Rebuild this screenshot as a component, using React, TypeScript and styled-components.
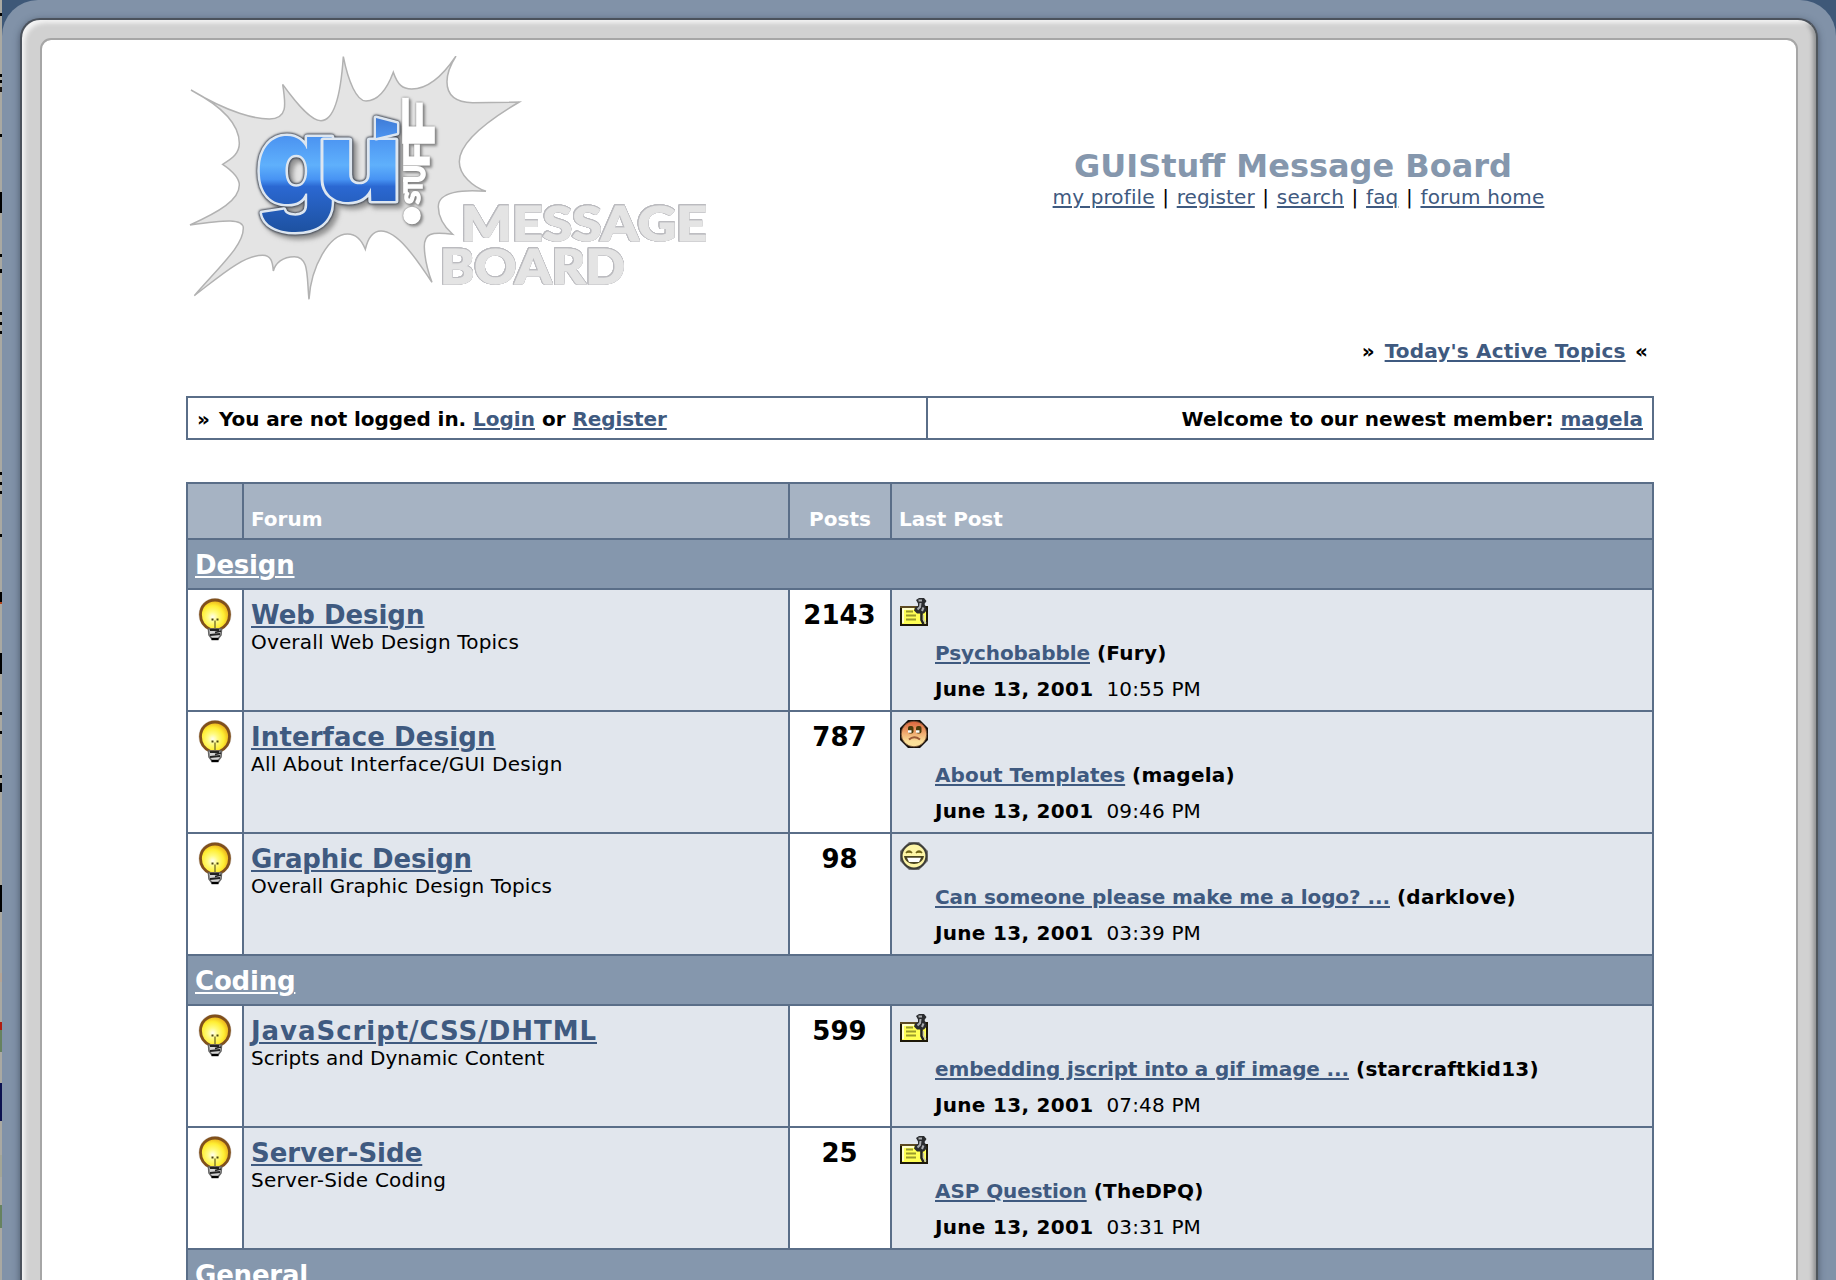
import React from "react";
import styled, { createGlobalStyle } from "styled-components";

const ink = {
  line: "#5a6e88",
  link: "#3f5a80",
  head: "#a6b3c3",
  bar: "#8597ad",
  cell: "#e1e6ed",
};

const GlobalStyle = createGlobalStyle`
  * { box-sizing: border-box; }
  html, body { margin: 0; padding: 0; }
  body {
    height: 1280px;
    overflow: hidden;
    font-family: Verdana, "DejaVu Sans", sans-serif;
    font-size: 20px;
    line-height: 24px;
    color: #000;
  }
`;

/* ---------- window chrome ---------- */

const Page = styled.div`
  display: flex;
  width: 1836px;
  height: 1280px;
  overflow: hidden;
  background: #3e5878;
`;

const bandStops = (bands: [number, number, string][], base: string) => {
  const stops: string[] = [];
  let y = 0;
  bands.forEach(([from, to, color]) => {
    stops.push(`${base} ${y}px ${from}px`, `${color} ${from}px ${to}px`);
    y = to;
  });
  stops.push(`${base} ${y}px 1280px`);
  return `linear-gradient(180deg, ${stops.join(", ")})`;
};

const sliver: [number, number, string][] = [
  [13, 16, "#000"], [74, 77, "#000"], [80, 83, "#000"], [87, 92, "#1c1712"],
  [134, 137, "#000"], [192, 213, "#000"], [254, 257, "#000"], [269, 273, "#000"],
  [312, 315, "#000"], [322, 325, "#000"], [331, 334, "#000"], [472, 475, "#000"],
  [482, 485, "#000"], [491, 494, "#000"], [534, 537, "#000"], [592, 602, "#000"],
  [602, 604, "#b3441c"], [653, 674, "#000"], [712, 715, "#000"], [731, 734, "#000"],
  [775, 778, "#000"], [783, 792, "#000"], [885, 912, "#000"], [973, 982, "#b5a494"],
  [1022, 1030, "#b01c10"], [1030, 1052, "#66825e"], [1083, 1121, "#0c1250"],
  [1155, 1177, "#a3a596"], [1205, 1228, "#66825e"],
];

const Sliver = styled.div`
  flex: 0 0 2px;
  background: ${bandStops(sliver, "#aaa9a2")};
`;

const Shell = styled.div`
  flex: 1;
  padding: 18px 18px 0;
  background: #8192a8;
  border-radius: 36px 36px 0 0;
`;

const Bezel = styled.div`
  height: 1400px;
  padding: 18px 18px 0 18px;
  border: 2px solid #4b525c;
  border-right-color: #4f565c;
  border-radius: 20px 20px 0 0;
  background: #d1d1d1;
  box-shadow:
    0 2px 7px rgba(38, 48, 66, 0.6),
    inset 5px 5px 4px -2px #f4f4f4,
    inset -5px 0 4px -2px #8f9192;
`;

const Sheet = styled.div`
  height: 100%;
  padding: 16px 142px 0 144px;
  border: 2px solid #a6a6a6;
  border-radius: 11px 11px 0 0;
  background: #fff;
  background-clip: padding-box;
`;

/* ---------- text ---------- */

const Run = styled.span<{ $track?: number }>`
  letter-spacing: ${(p) => p.$track ?? 0}px;
`;

const Link = styled.a<{ $track?: number; $light?: boolean }>`
  color: ${(p) => (p.$light ? "#fff" : ink.link)};
  letter-spacing: ${(p) => p.$track ?? 0}px;
  text-decoration: underline;
  text-decoration-thickness: 2px;
  text-underline-offset: 2px;
  cursor: pointer;
`;

const Quote = styled.span<{ $before?: number; $after?: number }>`
  margin-left: ${(p) => p.$before ?? 0}px;
  margin-right: ${(p) => p.$after ?? 0}px;
`;

/* ---------- masthead ---------- */

const Masthead = styled.header`
  display: flex;
  justify-content: space-between;
  height: 244px;
`;

const Titles = styled.div`
  width: 722px;
  padding-top: 92px;
  text-align: center;
`;

const BoardTitle = styled.h1`
  margin: 0;
  font-size: 32px;
  line-height: 37px;
  color: ${ink.bar};
`;

const Nav = styled.nav`
  padding-left: 11px;
`;

const Pipe = styled.span`
  margin: 0 7.8px 0 7.5px;
`;

const ActiveTopics = styled.div`
  margin: 39px 6px 33px 0;
  font-weight: 700;
  text-align: right;
`;

const StatusBar = styled.div`
  display: grid;
  grid-template-columns: 738px 1fr;
  gap: 2px;
  height: 44px;
  margin-bottom: 42px;
  padding: 2px;
  background: ${ink.line};
  font-weight: 700;
`;

const StatusCell = styled.div<{ $end?: boolean }>`
  padding: 9px 9px 0;
  background: #fff;
  text-align: ${(p) => (p.$end ? "right" : "left")};
`;

/* ---------- forum table ---------- */

const Table = styled.div`
  display: grid;
  grid-template-columns: 54px 544px 100px 1fr;
  gap: 2px;
  padding: 2px;
  background: ${ink.line};
`;

const HeadCell = styled.div<{ $center?: boolean }>`
  height: 54px;
  padding: 23px 7px 0;
  background: ${ink.head};
  color: #fff;
  font-weight: 700;
  text-align: ${(p) => (p.$center ? "center" : "left")};
`;

const Category = styled.div`
  grid-column: 1 / -1;
  height: 48px;
  padding: 9px 7px 0;
  background: ${ink.bar};
  font-size: 26px;
  font-weight: 700;
  line-height: 32px;
`;

const IconCell = styled.div`
  display: flex;
  justify-content: center;
  align-items: flex-start;
  height: 120px;
  padding-top: 8px;
  background: #fff;
`;

const ForumCell = styled.div`
  padding: 10px 7px 0;
  background: ${ink.cell};
`;

const ForumName = styled.div`
  font-size: 26px;
  font-weight: 700;
  line-height: 30px;
`;

const PostCount = styled.div`
  padding: 10px 1px 0 0;
  background: #fff;
  font-size: 26px;
  font-weight: 700;
  line-height: 30px;
  text-align: center;
`;

const LastCell = styled.div`
  padding: 8px 8px 0;
  background: ${ink.cell};

  svg { display: block; }
`;

const LastInfo = styled.div`
  display: flex;
  flex-direction: column;
  gap: 12px;
  padding: 15px 0 0 35px;
`;

const Stamp = styled.div`
  white-space: pre;
`;

/* ---------- drawings ---------- */

const burst =
  "M15 120 C130 190 210 207 250 207 C305 207 300 165 290 103 C335 165 375 212 405 212 C447 212 465 125 472 20 " +
  "C487 95 512 153 540 153 C575 153 603 118 622 67 C635 105 650 117 677 117 C725 117 770 78 810 18 " +
  "C793 45 783 70 783 95 C783 140 815 157 860 158 L1000 156 C900 215 820 280 820 335 C820 375 860 410 900 424 " +
  "C830 418 757 425 757 470 C757 505 775 530 800 553 C735 545 715 550 715 590 C716 630 726 665 738 697 " +
  "C690 625 635 543 585 543 C560 543 545 568 538 598 C525 565 505 552 485 552 C430 552 375 650 369 748 " +
  "C362 680 370 620 325 620 C290 620 268 640 262 663 C260 635 255 616 230 616 C170 616 100 680 25 737 " +
  "C110 640 172 585 172 535 C172 505 120 510 12 525 C100 485 160 450 160 405 C160 380 135 360 110 343 " +
  "C140 325 160 310 160 280 C160 220 100 165 15 120 Z";

const LogoSvg = styled.svg`
  .gui {
    font-family: Inter, Roboto, sans-serif;
    font-weight: 900;
    fill: url(#blue);
    stroke: #dde6f0;
    stroke-width: 5px;
    stroke-linejoin: round;
    paint-order: stroke;
    filter: drop-shadow(0 0 0.8px #3c4350) drop-shadow(0 0 0.8px #3c4350) drop-shadow(4px 4px 2px rgba(70, 70, 70, 0.5));
  }
  .stuff {
    font-family: Lato, sans-serif;
    font-weight: 900;
    fill: #fff;
    stroke: #fff;
    stroke-width: 1.6px;
    filter: drop-shadow(0 0 0.8px #777) drop-shadow(2px 2px 1px rgba(90, 90, 90, 0.6));
  }
  .board {
    font-family: Lato, sans-serif;
    font-weight: 900;
    font-size: 47px;
    fill: #e4e4e4;
    stroke: #e4e4e4;
    stroke-width: 1.2px;
    filter: drop-shadow(0.7px 0 0 #bbbbbf) drop-shadow(-0.7px 0 0 #bbbbbf) drop-shadow(0 0.7px 0 #bbbbbf) drop-shadow(0 -0.7px 0 #bbbbbf);
  }
`;

const stuff: [string, number, number, number][] = [
  ["S", 204, 21, 13], ["T", 193, 24, 13], ["U", 183, 28, 18], ["F", 168, 34, 26], ["F", 149, 42, 52],
];

function Logo() {
  return (
    <LogoSvg width="540" height="244" viewBox="186 56 540 244" aria-label="gui stuff message board">
      <defs>
        <linearGradient id="blue" gradientUnits="userSpaceOnUse" x1="0" y1="118" x2="0" y2="236">
          <stop offset="0" stopColor="#3f7bd6" />
          <stop offset="0.18" stopColor="#4d96f2" />
          <stop offset="0.4" stopColor="#5fb0fc" />
          <stop offset="0.52" stopColor="#4793f3" />
          <stop offset="0.58" stopColor="#2b68d2" />
          <stop offset="1" stopColor="#1c4f9c" />
        </linearGradient>
      </defs>
      <path d={burst} transform="translate(186 50) scale(0.3333)" fill="#e4e4e4" stroke="#b2b2b2" strokeWidth="4.5" />
      <g className="gui">
        <text x="256" y="205" fontSize="124" textLength="82" lengthAdjust="spacingAndGlyphs">g</text>
        <text x="317" y="201" fontSize="111" textLength="85" lengthAdjust="spacingAndGlyphs">u</text>
        <path d="M376 118 L397 123.500 V133 L376 138 Z" />
      </g>
      <g className="stuff">
        {stuff.map(([c, y, size, length], i) => (
          <text
            key={i}
            fontSize={size}
            textLength={length}
            lengthAdjust="spacingAndGlyphs"
            transform={`translate(${405 + size * 0.7} ${y}) rotate(-90)`}
          >
            {c}
          </text>
        ))}
        <circle cx="412" cy="215.5" r="8" />
      </g>
      <g className="board">
        <text x="461" y="240.500" textLength="246" lengthAdjust="spacingAndGlyphs">MESSAGE</text>
        <text x="440" y="283.500" textLength="185" lengthAdjust="spacingAndGlyphs">BOARD</text>
      </g>
    </LogoSvg>
  );
}

function Bulb() {
  return (
    <svg width="34" height="43" viewBox="0 0 34 43">
      <defs>
        <radialGradient id="glow" cx="0.42" cy="0.58" r="0.6">
          <stop offset="0" stopColor="#fffef0" />
          <stop offset="0.3" stopColor="#fffb80" />
          <stop offset="0.65" stopColor="#ffee32" />
          <stop offset="1" stopColor="#e8a818" />
        </radialGradient>
      </defs>
      <circle cx="17" cy="16.500" r="16.500" fill="#dcd8d4" />
      <path d="M17 2 C8.500 2 2.500 8.500 2.500 16.500 C2.500 24 7 29 12.500 31.500 H21.500 C27 29 31.500 24 31.500 16.500 C31.500 8.500 25.500 2 17 2 Z" fill="url(#glow)" stroke="#80501c" strokeWidth="2.8" />
      <path d="M13.500 21.500 H15.500 M18.500 21.500 H20.500" stroke="#4a4410" strokeWidth="2.2" />
      <path d="M17 22.500 V31" stroke="#8b8230" strokeWidth="1.6" />
      <path d="M10.500 31 H23.500 L23 37 L20 41 H14 L11 37 Z" fill="#d4d4d4" stroke="#666" strokeWidth="1.6" />
      <path d="M12 32 H21 M17 34.500 L23 33 M12 37 L22 36" stroke="#222" strokeWidth="1.8" />
      <path d="M13.500 41 H20.500" stroke="#000" strokeWidth="2.4" />
    </svg>
  );
}

function Note() {
  return (
    <svg width="28" height="28" viewBox="0 0 28 28">
      <rect x="1" y="9" width="26" height="18" fill="#ffff55" stroke="#1d1808" strokeWidth="2" />
      <path d="M0 9 H18" stroke="#5d4a22" strokeWidth="2" />
      <path d="M3 25 V11 H14" fill="none" stroke="#fffff0" strokeWidth="1.6" />
      <path d="M6 13.500 H13 M6 17.500 H16 M6 21.500 H16" stroke="#9a9a2c" strokeWidth="1.8" />
      <path d="M21.500 14 V22 L23.500 26" fill="none" stroke="#222" strokeWidth="2.6" />
      <path d="M23.500 17 V22 L26 25.500" fill="none" stroke="#c8c8b0" strokeWidth="1.4" />
      <path d="M16 2 L19 0 H24 L26.500 3 L24.500 6 L25.500 8 L27 12 L24 15.500 H17 L14 12.500 L15 9.500 L18 8 L18 5.500 Z" fill="#2a2c2f" />
      <path d="M18.500 2.500 H22 M20.500 5 L20 9 L17.500 11.500 M23.500 9.500 L22 13" fill="none" stroke="#a9acb0" strokeWidth="2" />
    </svg>
  );
}

function SadFace() {
  return (
    <svg width="28" height="28" viewBox="0 0 28 28">
      <defs>
        <linearGradient id="flush" x1="0" y1="0" x2="0" y2="1">
          <stop offset="0" stopColor="#d9633c" />
          <stop offset="0.4" stopColor="#eda068" />
          <stop offset="0.8" stopColor="#fbe09a" />
        </linearGradient>
      </defs>
      <path d="M8 0 H20 L28 8 V20 L20 28 H8 L0 20 V8 Z" fill="#15100c" />
      <circle cx="14" cy="14" r="12.8" fill="url(#flush)" stroke="#6d4a30" strokeWidth="0.8" />
      <rect x="8" y="6" width="5.500" height="7.500" rx="2" fill="#4b3c0c" />
      <rect x="16" y="6" width="5.500" height="7.500" rx="2" fill="#4b3c0c" />
      <path d="M8 11.500 H11.500 M16 11.500 H19.500" stroke="#fff" strokeWidth="2.4" />
      <path d="M9 19.500 Q14 15 20 19.500" fill="none" stroke="#9b5a38" strokeWidth="2" />
    </svg>
  );
}

function GrinFace() {
  return (
    <svg width="28" height="28" viewBox="0 0 28 28">
      <path d="M9 0 H19 L28 9 V19 L19 28 H9 L0 19 V9 Z" fill="#77777a" />
      <circle cx="14" cy="14" r="12.400" fill="#fdf5a6" stroke="#3e3e38" strokeWidth="2" />
      <path d="M6 11 Q9 7 12 11 M16 11 Q19 7 22 11" fill="#8a7a20" stroke="#6e6218" strokeWidth="1.6" />
      <path d="M4 14 H24 C22.500 24.500 5.500 24.500 4 14 Z" fill="#4a4420" />
      <path d="M7 15.800 H21 L19 20 H9 Z" fill="#fff" />
    </svg>
  );
}

const moods = { note: Note, sad: SadFace, grin: GrinFace };

/* ---------- data ---------- */

interface Forum {
  name: string;
  nameTrack: number;
  about: string;
  aboutTrack: number;
  posts: number;
  mood: keyof typeof moods;
  topic: string;
  topicTrack: number;
  author: string;
  time: string;
}

const groups: { title: string; forums: Forum[] }[] = [
  {
    title: "Design",
    forums: [
      { name: "Web Design", nameTrack: -0.04, about: "Overall Web Design Topics", aboutTrack: 0.163, posts: 2143, mood: "note", topic: "Psychobabble", topicTrack: -0.08, author: "Fury", time: "10:55 PM" },
      { name: "Interface Design", nameTrack: 0.11, about: "All About Interface/GUI Design", aboutTrack: 0.24, posts: 787, mood: "sad", topic: "About Templates", topicTrack: 0.05, author: "magela", time: "09:46 PM" },
      { name: "Graphic Design", nameTrack: -0.14, about: "Overall Graphic Design Topics", aboutTrack: 0.1, posts: 98, mood: "grin", topic: "Can someone please make me a logo? ...", topicTrack: -0.081, author: "darklove", time: "03:39 PM" },
    ],
  },
  {
    title: "Coding",
    forums: [
      { name: "JavaScript/CSS/DHTML", nameTrack: 0.95, about: "Scripts and Dynamic Content", aboutTrack: 0.02, posts: 599, mood: "note", topic: "embedding jscript into a gif image ...", topicTrack: -0.13, author: "starcraftkid13", time: "07:48 PM" },
      { name: "Server-Side", nameTrack: 0, about: "Server-Side Coding", aboutTrack: 0.23, posts: 25, mood: "note", topic: "ASP Question", topicTrack: -0.08, author: "TheDPQ", time: "03:31 PM" },
    ],
  },
  { title: "General", forums: [] },
];

const navItems = ["my profile", "register", "search", "faq", "forum home"];

function ForumRow({ forum }: { forum: Forum }) {
  const Mood = moods[forum.mood];
  return (
    <>
      <IconCell><Bulb /></IconCell>
      <ForumCell>
        <ForumName><Link $track={forum.nameTrack}>{forum.name}</Link></ForumName>
        <Run $track={forum.aboutTrack}>{forum.about}</Run>
      </ForumCell>
      <PostCount>{forum.posts}</PostCount>
      <LastCell>
        <Mood />
        <LastInfo>
          <b>
            <Link $track={forum.topicTrack}>{forum.topic}</Link> <Run $track={0.25}>({forum.author})</Run>
          </b>
          <Stamp>
            <b><Run $track={0.3}>June 13, 2001</Run></b>
            <Run $track={0.16}>{"  " + forum.time}</Run>
          </Stamp>
        </LastInfo>
      </LastCell>
    </>
  );
}

export default function App() {
  return (
    <>
      <GlobalStyle />
      <Page>
        <Sliver />
        <Shell>
          <Bezel>
            <Sheet>
              <Masthead>
                <Logo />
                <Titles>
                  <BoardTitle>GUIStuff Message Board</BoardTitle>
                  <Nav>
                    {navItems.map((item, i) => (
                      <React.Fragment key={item}>
                        {i > 0 && <Pipe>|</Pipe>}
                        <Link $track={0.12}>{item}</Link>
                      </React.Fragment>
                    ))}
                  </Nav>
                </Titles>
              </Masthead>
              <ActiveTopics>
                <Quote $after={3}>»</Quote> <Link $track={0.193}>Today's Active Topics</Link> <Quote $before={2.5}>«</Quote>
              </ActiveTopics>
              <StatusBar>
                <StatusCell>
                  <Quote $after={2}>»</Quote> <Run $track={-0.07}>You are not logged in.</Run> <Link>Login</Link> or{" "}
                  <Link $track={-0.1}>Register</Link>
                </StatusCell>
                <StatusCell $end>
                  <Run $track={-0.04}>Welcome to our newest member: </Run>
                  <Link>magela</Link>
                </StatusCell>
              </StatusBar>
              <Table>
                <HeadCell />
                <HeadCell>Forum</HeadCell>
                <HeadCell $center>Posts</HeadCell>
                <HeadCell><Run $track={-0.1}>Last Post</Run></HeadCell>
                {groups.map((group) => (
                  <React.Fragment key={group.title}>
                    <Category><Link $light $track={-0.2}>{group.title}</Link></Category>
                    {group.forums.map((forum) => (
                      <ForumRow key={forum.name} forum={forum} />
                    ))}
                  </React.Fragment>
                ))}
              </Table>
            </Sheet>
          </Bezel>
        </Shell>
      </Page>
    </>
  );
}
